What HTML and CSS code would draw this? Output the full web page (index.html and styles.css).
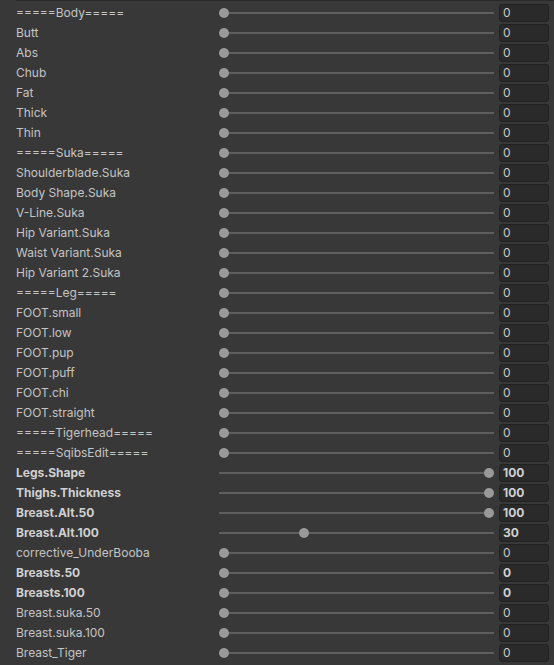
FILE: index.html
```html
<!DOCTYPE html>
<html>
<head>
<meta charset="utf-8">
<link rel="stylesheet" href="styles.css">
</head>
<body>
<div class="list">
  <div class="row"><span class="label">=====Body=====</span><div class="slider"><div class="track"></div><div class="thumb" style="--v:0"></div></div><div class="field">0</div></div>
  <div class="row"><span class="label">Butt</span><div class="slider"><div class="track"></div><div class="thumb" style="--v:0"></div></div><div class="field">0</div></div>
  <div class="row"><span class="label">Abs</span><div class="slider"><div class="track"></div><div class="thumb" style="--v:0"></div></div><div class="field">0</div></div>
  <div class="row"><span class="label">Chub</span><div class="slider"><div class="track"></div><div class="thumb" style="--v:0"></div></div><div class="field">0</div></div>
  <div class="row"><span class="label">Fat</span><div class="slider"><div class="track"></div><div class="thumb" style="--v:0"></div></div><div class="field">0</div></div>
  <div class="row"><span class="label">Thick</span><div class="slider"><div class="track"></div><div class="thumb" style="--v:0"></div></div><div class="field">0</div></div>
  <div class="row"><span class="label">Thin</span><div class="slider"><div class="track"></div><div class="thumb" style="--v:0"></div></div><div class="field">0</div></div>
  <div class="row"><span class="label">=====Suka=====</span><div class="slider"><div class="track"></div><div class="thumb" style="--v:0"></div></div><div class="field">0</div></div>
  <div class="row"><span class="label">Shoulderblade.Suka</span><div class="slider"><div class="track"></div><div class="thumb" style="--v:0"></div></div><div class="field">0</div></div>
  <div class="row"><span class="label">Body Shape.Suka</span><div class="slider"><div class="track"></div><div class="thumb" style="--v:0"></div></div><div class="field">0</div></div>
  <div class="row"><span class="label">V-Line.Suka</span><div class="slider"><div class="track"></div><div class="thumb" style="--v:0"></div></div><div class="field">0</div></div>
  <div class="row"><span class="label">Hip Variant.Suka</span><div class="slider"><div class="track"></div><div class="thumb" style="--v:0"></div></div><div class="field">0</div></div>
  <div class="row"><span class="label">Waist Variant.Suka</span><div class="slider"><div class="track"></div><div class="thumb" style="--v:0"></div></div><div class="field">0</div></div>
  <div class="row"><span class="label">Hip Variant 2.Suka</span><div class="slider"><div class="track"></div><div class="thumb" style="--v:0"></div></div><div class="field">0</div></div>
  <div class="row"><span class="label">=====Leg=====</span><div class="slider"><div class="track"></div><div class="thumb" style="--v:0"></div></div><div class="field">0</div></div>
  <div class="row"><span class="label">FOOT.small</span><div class="slider"><div class="track"></div><div class="thumb" style="--v:0"></div></div><div class="field">0</div></div>
  <div class="row"><span class="label">FOOT.low</span><div class="slider"><div class="track"></div><div class="thumb" style="--v:0"></div></div><div class="field">0</div></div>
  <div class="row"><span class="label">FOOT.pup</span><div class="slider"><div class="track"></div><div class="thumb" style="--v:0"></div></div><div class="field">0</div></div>
  <div class="row"><span class="label">FOOT.puff</span><div class="slider"><div class="track"></div><div class="thumb" style="--v:0"></div></div><div class="field">0</div></div>
  <div class="row"><span class="label">FOOT.chi</span><div class="slider"><div class="track"></div><div class="thumb" style="--v:0"></div></div><div class="field">0</div></div>
  <div class="row"><span class="label">FOOT.straight</span><div class="slider"><div class="track"></div><div class="thumb" style="--v:0"></div></div><div class="field">0</div></div>
  <div class="row"><span class="label">=====Tigerhead=====</span><div class="slider"><div class="track"></div><div class="thumb" style="--v:0"></div></div><div class="field">0</div></div>
  <div class="row"><span class="label">=====SqibsEdit=====</span><div class="slider"><div class="track"></div><div class="thumb" style="--v:0"></div></div><div class="field">0</div></div>
  <div class="row bold"><span class="label">Legs.Shape</span><div class="slider"><div class="track"></div><div class="thumb" style="--v:100"></div></div><div class="field">100</div></div>
  <div class="row bold"><span class="label">Thighs.Thickness</span><div class="slider"><div class="track"></div><div class="thumb" style="--v:100"></div></div><div class="field">100</div></div>
  <div class="row bold"><span class="label">Breast.Alt.50</span><div class="slider"><div class="track"></div><div class="thumb" style="--v:100"></div></div><div class="field">100</div></div>
  <div class="row bold"><span class="label">Breast.Alt.100</span><div class="slider"><div class="track"></div><div class="thumb" style="--v:30"></div></div><div class="field">30</div></div>
  <div class="row"><span class="label">corrective_UnderBooba</span><div class="slider"><div class="track"></div><div class="thumb" style="--v:0"></div></div><div class="field">0</div></div>
  <div class="row bold"><span class="label">Breasts.50</span><div class="slider"><div class="track"></div><div class="thumb" style="--v:0"></div></div><div class="field">0</div></div>
  <div class="row bold"><span class="label">Breasts.100</span><div class="slider"><div class="track"></div><div class="thumb" style="--v:0"></div></div><div class="field">0</div></div>
  <div class="row"><span class="label">Breast.suka.50</span><div class="slider"><div class="track"></div><div class="thumb" style="--v:0"></div></div><div class="field">0</div></div>
  <div class="row"><span class="label">Breast.suka.100</span><div class="slider"><div class="track"></div><div class="thumb" style="--v:0"></div></div><div class="field">0</div></div>
  <div class="row"><span class="label">Breast_Tiger</span><div class="slider"><div class="track"></div><div class="thumb" style="--v:0"></div></div><div class="field">0</div></div>
</div>
</body>
</html>
```
FILE: styles.css
```css
html, body {
  margin: 0;
  padding: 0;
  background: #383838;
}
body {
  font-family: Inter, "Noto Sans", "DejaVu Sans", sans-serif;
  font-size: 12px;
  color: #c4c4c4;
  overflow: hidden;
}
.list {
  border-top: 1px solid #2b2b2b;
  margin-left: 16px;
  padding-top: 2px;
}
.row {
  display: grid;
  grid-template-columns: 198px 275px 50px;
  column-gap: 5px;
  height: 20px;
  align-items: center;
}
.label {
  white-space: nowrap;
  line-height: 20px;
}
.slider {
  position: relative;
  height: 20px;
}
.track {
  position: absolute;
  left: 0;
  right: 0;
  top: 9px;
  height: 2px;
  background: #5e5e5e;
}
.thumb {
  position: absolute;
  top: 5px;
  left: calc(var(--v) * 2.65px);
  width: 10px;
  height: 10px;
  border-radius: 50%;
  background: #999999;
}
.field {
  box-sizing: border-box;
  height: 18px;
  background: #2a2a2a;
  border: 1px solid #212121;
  border-radius: 3px;
  padding-left: 3px;
  line-height: 16px;
  color: #c8c8c8;
}
.bold .label,
.bold .field {
  font-weight: bold;
  color: #d0d0d0;
}
```
